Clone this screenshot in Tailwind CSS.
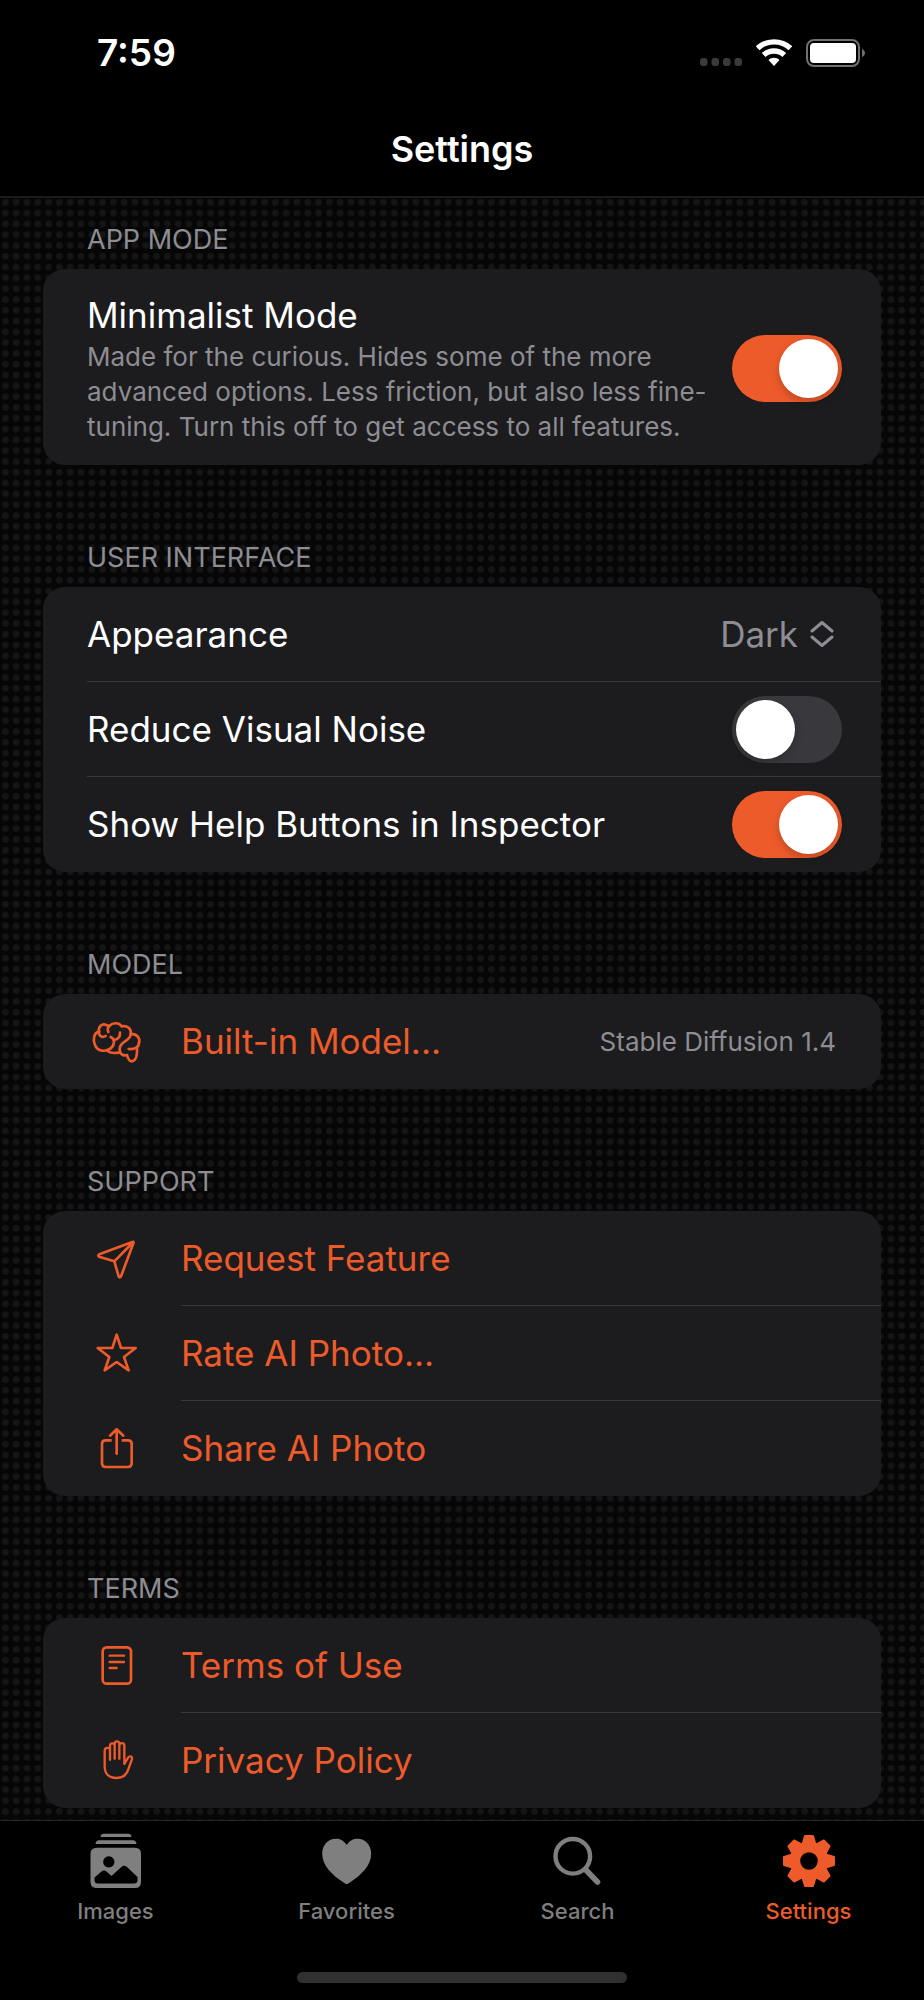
<!DOCTYPE html>
<html lang="en">
<head>
    <meta charset="UTF-8">
    <meta name="viewport" content="width=device-width, initial-scale=1.0">
    <title>AI Photo - Settings</title>
    <script src="https://cdn.jsdelivr.net/npm/@tailwindcss/browser@4"></script>
</head>
<body class="bg-black text-white font-['Inter',sans-serif] flex flex-col min-h-screen">
    <!-- Status bar and title -->
    <header class="bg-black border-b-2 border-[#1b1b1b]">
        <div class="h-[101px] pt-1 pl-[97px] pr-[59px] flex items-center justify-between">
            <span class="text-[37px] font-semibold">7:59</span>
            <div class="flex items-center gap-[14px]">
                <svg class="w-[42px] h-7" viewBox="0 0 42 28" fill="#3a3a3a">
                    <rect x="0" y="19" width="7.5" height="8" rx="3"/>
                    <rect x="11.5" y="19" width="7.5" height="8" rx="3"/>
                    <rect x="23" y="19" width="7.5" height="8" rx="3"/>
                    <rect x="34.5" y="19" width="7.5" height="8" rx="3"/>
                </svg>
                <svg class="w-9 h-7" viewBox="0 0 36 28" fill="none" stroke="#fff" stroke-width="5.400">
                    <path d="M1.6 9.2C10.500 .8 25.500 .8 34.400 9.200"/>
                    <path d="M7.700 16C13.500 10.600 22.500 10.600 28.300 16"/>
                    <path d="M12.500 21C15.500 18 20.500 18 23.500 21L18 27Z" fill="#fff" stroke="none"/>
                </svg>
                <svg class="w-[59px] h-7" viewBox="0 0 59 28">
                    <rect x="1" y="1" width="52" height="26" rx="7" fill="none" stroke="#717171" stroke-width="2"/>
                    <rect x="4" y="4" width="46" height="20" rx="4" fill="#fff"/>
                    <path d="M56 10c4 2 4 6 0 8z" fill="#717171"/>
                </svg>
            </div>
        </div>
        <h1 class="h-[95px] flex items-center justify-center text-[36px] font-semibold">Settings</h1>
    </header>

    <!-- Settings groups -->
    <main class="relative grow bg-[#060606] px-[43px] pt-[22px] pb-3 isolate">
        <!-- Dotted backdrop -->
        <svg class="absolute inset-0 size-full -z-10" aria-hidden="true">
            <defs>
                <pattern id="dots" width="10" height="10" patternUnits="userSpaceOnUse" patternTransform="scale(1.08)">
                    <circle cx="5" cy="4" r="3" fill="#151515"/>
                </pattern>
            </defs>
            <rect width="100%" height="100%" fill="url(#dots)"/>
        </svg>

        <section>
            <h2 class="pl-11 mb-[9px] text-[27px] leading-10 text-[#8d8d93]">APP MODE</h2>
            <div class="bg-[#1c1c1e] rounded-[22px] pl-11 pr-[39px] pt-[23px] pb-[21px] flex items-center justify-between">
                <div>
                    <label for="minimalist" class="block text-[35px] leading-[47px]">Minimalist Mode</label>
                    <p class="text-[26px] leading-[35px] text-[#8d8d93]">Made for the curious. Hides some of the more<br>advanced options. Less friction, but also less fine-<br>tuning. Turn this off to get access to all features.</p>
                </div>
                <input type="checkbox" id="minimalist" checked class="shrink-0 appearance-none w-[110px] h-[67px] p-1 rounded-full bg-[#39383d] checked:bg-[#ee5b2a] before:content-[''] before:block before:size-[59px] before:rounded-full before:bg-white before:shadow-[0_4px_10px_rgba(0,0,0,0.2)] checked:before:translate-x-[43px]">
            </div>
        </section>

        <section class="mt-[73px]">
            <h2 class="pl-11 mb-[9px] text-[27px] leading-10 text-[#8d8d93]">USER INTERFACE</h2>
            <div class="bg-[#1c1c1e] rounded-[22px] pl-11 text-[35px]">
                <div class="h-[95px] border-b border-[#38383a] pr-[47px] flex items-center justify-between">
                    <label for="appearance">Appearance</label>
                    <div class="flex items-center gap-3 text-[#8d8d93]">
                        <select id="appearance" class="appearance-none field-sizing-content bg-transparent">
                            <option>Dark</option>
                            <option>Light</option>
                        </select>
                        <svg class="w-6 h-7" viewBox="0 0 24 28" fill="none" stroke="currentColor" stroke-width="3" stroke-linecap="round" stroke-linejoin="round"><path d="M2 11 12 2.500 22 11M2 17l10 8.500L22 17"/></svg>
                    </div>
                </div>
                <div class="h-[95px] border-b border-[#38383a] pr-[39px] flex items-center justify-between">
                    <label for="noise">Reduce Visual Noise</label>
                    <input type="checkbox" id="noise" class="shrink-0 appearance-none w-[110px] h-[67px] p-1 rounded-full bg-[#39383d] checked:bg-[#ee5b2a] before:content-[''] before:block before:size-[59px] before:rounded-full before:bg-white before:shadow-[0_4px_10px_rgba(0,0,0,0.2)] checked:before:translate-x-[43px]">
                </div>
                <div class="h-[95px] pr-[39px] flex items-center justify-between">
                    <label for="help">Show Help Buttons in Inspector</label>
                    <input type="checkbox" id="help" checked class="shrink-0 appearance-none w-[110px] h-[67px] p-1 rounded-full bg-[#39383d] checked:bg-[#ee5b2a] before:content-[''] before:block before:size-[59px] before:rounded-full before:bg-white before:shadow-[0_4px_10px_rgba(0,0,0,0.2)] checked:before:translate-x-[43px]">
                </div>
            </div>
        </section>

        <section class="mt-[73px]">
            <h2 class="pl-11 mb-[9px] text-[27px] leading-10 text-[#8d8d93]">MODEL</h2>
            <div class="bg-[#1c1c1e] rounded-[22px] pl-11">
                <a href="#" class="flex items-center gap-[34px] text-[35px] text-[#ee5b2a]">
                    <svg class="shrink-0 size-[60px]" viewBox="51 33 180 180" fill="none" stroke="currentColor" stroke-width="8" stroke-linecap="round" stroke-linejoin="round">
                        <path d="M87 92C84 78 96 66 109 72C113 74 116 75 119 74C128 64 148 64 155 76C171 72 186 84 182 100C199 97 211 110 207 125"/>
                        <path d="M87 92C71 96 68 116 75 132C82 152 108 153 121 143C133 134 137 115 122 108"/>
                        <path d="M87 92C85 104 96 112 107 105M119 74C112 80 112 86 115 93M150 95C151 108 145 115 132 117"/>
                        <path d="M182 100C182 122 150 119 149 143C149 148 150 152 151 155"/>
                        <path d="M112 149C120 157 136 157 150 154C155 163 163 164 171 162C174 174 178 181 186 181C198 179 202 161 201 140"/>
                        <path d="M207 125C207 139 192 146 176 144"/>
                    </svg>
                    <span class="grow h-[95px] pr-[45px] flex items-center justify-between">
                        Built-in Model...
                        <span class="text-[26px] text-[#8d8d93]">Stable Diffusion 1.4</span>
                    </span>
                </a>
            </div>
        </section>

        <section class="mt-[73px]">
            <h2 class="pl-11 mb-[9px] text-[27px] leading-10 text-[#8d8d93]">SUPPORT</h2>
            <div class="bg-[#1c1c1e] rounded-[22px] pl-11 text-[35px] text-[#ee5b2a]">
                <a href="#" class="flex items-center gap-[34px]">
                    <svg class="shrink-0 size-[60px]" viewBox="51 26 180 180" fill="none" stroke="currentColor" stroke-width="8" stroke-linecap="round" stroke-linejoin="round"><path d="M88 102 187 65Q192 63 190 69L153 168Q149 174 146 168L133 123 87 109Q82 105 88 102ZM190 65 133 123"/></svg>
                    <span class="grow h-[95px] border-b border-[#38383a] flex items-center">Request Feature</span>
                </a>
                <a href="#" class="flex items-center gap-[34px]">
                    <svg class="shrink-0 size-[60px]" viewBox="51 311 180 180" fill="none" stroke="currentColor" stroke-width="8" stroke-linecap="round" stroke-linejoin="round"><path d="M140 343 153 383H197L162 410 176 450 140 425 104 450 118 410 83 383H127Z"/></svg>
                    <span class="grow h-[95px] border-b border-[#38383a] flex items-center">Rate AI Photo...</span>
                </a>
                <a href="#" class="flex items-center gap-[34px]">
                    <svg class="shrink-0 size-[60px]" viewBox="51 596 180 180" fill="none" stroke="currentColor" stroke-width="8" stroke-linecap="round" stroke-linejoin="round"><path stroke-linecap="butt" d="M125 660H107Q96 660 96 671V729Q96 740 107 740H174Q185 740 185 729V671Q185 660 174 660H155"/><path d="M140 700V627M120 646 140 627 160 646"/></svg>
                    <span class="grow h-[95px] flex items-center">Share AI Photo</span>
                </a>
            </div>
        </section>

        <section class="mt-[73px]">
            <h2 class="pl-11 mb-[9px] text-[27px] leading-10 text-[#8d8d93]">TERMS</h2>
            <div class="bg-[#1c1c1e] rounded-[22px] pl-11 text-[35px] text-[#ee5b2a]">
                <a href="#" class="flex items-center gap-[34px]">
                    <svg class="shrink-0 size-[60px]" viewBox="51 17 180 180" fill="none" stroke="currentColor" stroke-width="8" stroke-linecap="round"><rect x="98" y="51" width="85" height="109" rx="12"/><path stroke-width="7" d="M119 76H162M119 95H162M119 113H140"/></svg>
                    <span class="grow h-[95px] border-b border-[#38383a] flex items-center">Terms of Use</span>
                </a>
                <a href="#" class="flex items-center gap-[34px]">
                    <svg class="shrink-0 size-[60px]" viewBox="51 302 180 180" fill="none" stroke="currentColor" stroke-width="7" stroke-linecap="round" stroke-linejoin="round"><path d="M120 388V346A7 7 0 0 1 134 346V385M134 346V340A7 7 0 0 1 148 340V385M148 346A7 7 0 0 1 163 346V401L173 384C177 375 188 377 186 386L176 414C170 436 158 443 139 443C117 443 104 430 104 408V361C104 351 117 350 120 357"/></svg>
                    <span class="grow h-[95px] flex items-center">Privacy Policy</span>
                </a>
            </div>
        </section>
    </main>

    <!-- Tab bar -->
    <footer class="h-[180px] bg-black border-t border-[#262626] flex flex-col justify-between items-center">
        <nav class="w-full pt-3 flex text-[22px] leading-7 font-medium text-[#7f7f7f]">
            <a href="#" class="flex-1 flex flex-col items-center gap-2">
                <svg class="size-14" viewBox="0 0 56 56" fill="currentColor"><path d="M12.500 4Q13 .7 16 .7H40Q43 .7 43.500 4ZM7.500 11Q8 7.300 11 7.300H45Q48 7.300 48.500 11Z"/><path fill-rule="evenodd" d="M9 14.700H47Q53 14.700 53 20.700V49Q53 55 47 55H9Q2.500 55 2.500 49V20.700Q2.500 14.700 9 14.700ZM20.800 23.300a5.600 5.600 0 1 0 .01 0ZM6.500 44.500V47Q6.500 50.500 10 50.500H46Q49.500 50.500 49.500 47V44L39 34Q36.200 31.500 33.400 34L23.500 43 18.500 38.500Q16 36.700 13.500 38.500Z"/></svg>
                Images
            </a>
            <a href="#" class="flex-1 flex flex-col items-center gap-2">
                <svg class="size-14" viewBox="0 0 56 56" fill="currentColor"><path d="M27.700 12C25 7.500 21 5.700 17 5.700C9 5.700 3.200 12 3.200 20.500C3.200 32 12 41.500 26 50.500Q27.700 51.700 29.400 50.500C43.400 41.500 52.200 32 52.200 20.500C52.200 12 46.400 5.700 38.400 5.700C34.400 5.700 30.400 7.500 27.700 12Z"/></svg>
                Favorites
            </a>
            <a href="#" class="flex-1 flex flex-col items-center gap-2">
                <svg class="size-14" viewBox="0 0 56 56" fill="none" stroke="currentColor" stroke-linecap="round"><circle cx="22.800" cy="23.300" r="17.300" stroke-width="4.400"/><path d="M36 37 47.500 49" stroke-width="5.600"/></svg>
                Search
            </a>
            <a href="#" class="flex-1 flex flex-col items-center gap-2 text-[#ee5b2a]">
                <svg class="size-14" viewBox="-28 -28 56 56" fill="currentColor" stroke="currentColor" stroke-width="2" stroke-linejoin="round">
                    <circle r="14" fill="none" stroke-width="10.400"/>
                    <path id="tooth" d="M-6.500-16.500-4-25H4L6.500-16.500Z"/>
                    <use href="#tooth" transform="rotate(45)"/>
                    <use href="#tooth" transform="rotate(90)"/>
                    <use href="#tooth" transform="rotate(135)"/>
                    <use href="#tooth" transform="rotate(180)"/>
                    <use href="#tooth" transform="rotate(225)"/>
                    <use href="#tooth" transform="rotate(270)"/>
                    <use href="#tooth" transform="rotate(315)"/>
                </svg>
                Settings
            </a>
        </nav>
        <!-- Home indicator -->
        <div class="mb-[17px] w-[330px] h-[11px] rounded-full bg-[#303030]"></div>
    </footer>
</body>
</html>
